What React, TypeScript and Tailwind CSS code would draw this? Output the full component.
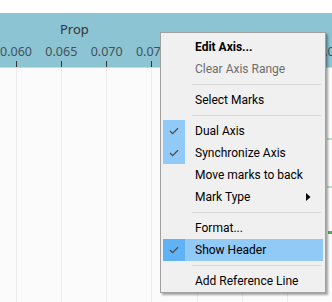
import React from 'react';

// --- Data ---
const ticks = ['0.060', '0.065', '0.070', '0.075', '0.080', '0.085', '0.090', '0.095'];

type Item =
    | { kind: 'item'; label: string; bold?: boolean; disabled?: boolean; checked?: boolean; active?: boolean; submenu?: boolean }
    | { kind: 'sep' };

const menu: Item[] = [
    { kind: 'item', label: 'Edit Axis...', bold: true },
    { kind: 'item', label: 'Clear Axis Range', disabled: true },
    { kind: 'sep' },
    { kind: 'item', label: 'Select Marks' },
    { kind: 'sep' },
    { kind: 'item', label: 'Dual Axis', checked: true },
    { kind: 'item', label: 'Synchronize Axis', checked: true },
    { kind: 'item', label: 'Move marks to back' },
    { kind: 'item', label: 'Mark Type', submenu: true },
    { kind: 'sep' },
    { kind: 'item', label: 'Format...' },
    { kind: 'item', label: 'Show Header', checked: true, active: true },
    { kind: 'sep' },
    { kind: 'item', label: 'Add Reference Line' },
];

const Check = () => (
    <svg width="10" height="8" viewBox="0 0 10 8">
        <path d="M1 4 L3.6 6.6 L9 1.2" fill="none" stroke="#4d4d4d" strokeWidth="1.3" />
    </svg>
);

const ContextMenu = () => (
    <div
        className="absolute left-[160px] top-[32px] w-[166px] bg-[#f0f0f0] border border-[#a0a0a0] shadow-[2px_2px_2px_rgba(0,0,0,0.35)] pt-[3px] px-[2px]"
        style={{ fontFamily: 'Roboto, "Noto Sans", sans-serif' }}
    >
        {menu.map((item, i) =>
            item.kind === 'sep' ? (
                <div key={i} className="h-[9px] flex items-center pl-[29px] pr-[2px]">
                    <div className="h-px w-full bg-[#d7d7d7]" />
                </div>
            ) : (
                <div key={i} className={`h-[22px] flex items-center ${item.active ? 'bg-[#91c9f7]' : ''}`}>
                    <div
                        className={`w-[22px] h-full flex items-center justify-center ${
                            item.checked ? (item.active ? 'bg-[#5fb2f6]' : 'bg-[#91c9f7]') : ''
                        }`}
                    >
                        {item.checked && <Check />}
                    </div>
                    <span
                        className={`ml-[10px] flex-1 text-[12px] leading-none ${
                            item.bold ? 'font-bold text-black' : item.disabled ? 'text-[#6d6d6d]' : 'text-black'
                        }`}
                    >
                        {item.label}
                    </span>
                    {item.submenu && (
                        <svg width="5" height="8" viewBox="0 0 5 8" className="mr-[12px]">
                            <path d="M0 0 L4.5 4 L0 8 Z" fill="#000" />
                        </svg>
                    )}
                </div>
            )
        )}
    </div>
);

const App = () => {
    return (
        <div
            className="relative w-[332px] h-[302px] overflow-hidden bg-white flex flex-col"
            style={{ fontFamily: '"Noto Sans", "Liberation Sans", sans-serif' }}
        >
            <div className="h-[13px] shrink-0 bg-white" />

            {/* --- Axis header band --- */}
            <div className="h-[55px] shrink-0 bg-[#8cc4d3] border-b border-[#c9d6da] flex flex-col">
                <div className="pl-[60px] pt-[7px] h-[31px] text-[13px] leading-[18px] text-[#333]">Prop</div>
                <div className="flex -ml-[6.65px]">
                    {ticks.map(t => (
                        <div key={t} className="w-[45.3px] shrink-0 flex flex-col items-center">
                            <span className="text-[12.5px] leading-[18px] text-[#45505a] whitespace-nowrap">{t}</span>
                            <div className="w-px h-[6px] bg-[#333]" />
                        </div>
                    ))}
                </div>
            </div>

            {/* --- Chart body --- */}
            <div className="flex-1 bg-[#fbfbfb] flex -ml-[6.65px]">
                {ticks.map((t, i) => (
                    <div key={t} className="w-[45.3px] shrink-0 flex justify-center">
                        {i === ticks.length - 1 ? (
                            <div className="relative w-px h-full bg-[#ececec]">
                                <div className="absolute left-[-6px] top-[70px] w-[6px] h-[2px] bg-[#b9e0c0]" />
                                <div className="absolute left-[-6px] top-[118px] w-[6px] h-[2px] bg-[#b9e0c0]" />
                                <div className="absolute left-[-5px] top-[163px] w-[5px] h-[3px] bg-[#4caf50]" />
                            </div>
                        ) : (
                            <div className="w-px h-full bg-[#ececec]" />
                        )}
                    </div>
                ))}
            </div>

            <ContextMenu />
        </div>
    );
};

export default App;
